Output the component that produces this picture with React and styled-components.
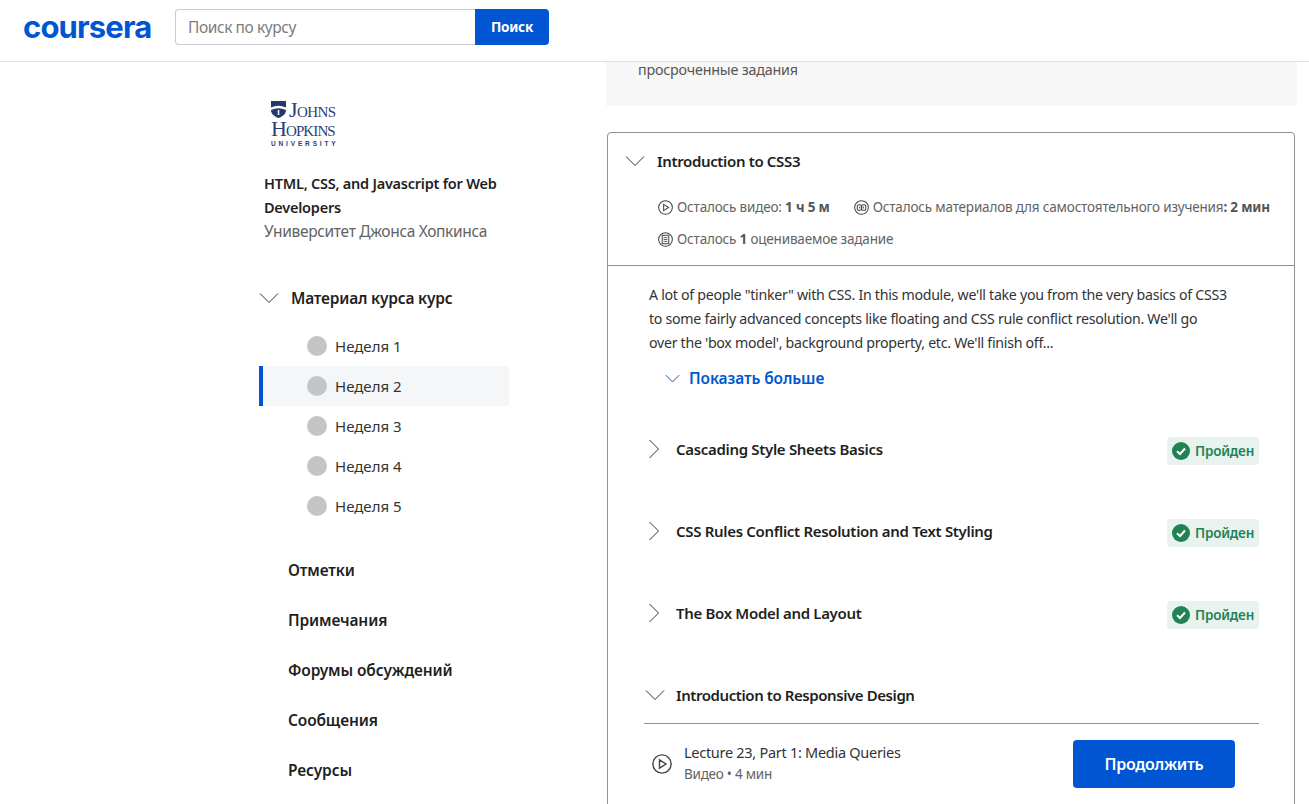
import React from 'react';
import styled, { createGlobalStyle } from 'styled-components';

const FONT = `"Noto Sans", "Open Sans", sans-serif`;

const Global = createGlobalStyle`
	html, body {
		margin: 0;
		padding: 0;
		background: #fff;
		font-family: ${FONT};
		color: #1f1f1f;
	}
	* { box-sizing: border-box; }
`;

const Page = styled.div`
	width: 1309px;
	height: 804px;
	overflow: hidden;
	display: flex;
	flex-direction: column;
`;

const Header = styled.header`
	height: 62px;
	flex: none;
	border-bottom: 1px solid #e1e1e3;
	display: flex;
	align-items: flex-start;
	padding: 9px 0 0 23px;
`;
const Wordmark = styled.div`
	width: 152px;
	height: 36px;
	font-family: Inter, sans-serif;
	font-weight: 700;
	font-size: 31px;
	line-height: 36px;
	letter-spacing: -0.85px;
	color: #0056d2;
`;
const SearchInput = styled.div`
	width: 300px;
	height: 36px;
	border: 1px solid #c9cbd4;
	border-right: none;
	border-radius: 4px 0 0 4px;
	padding-left: 12px;
	font-size: 15.5px;
	line-height: 34px;
	letter-spacing: -0.42px;
	color: #7c7c7c;
`;
const SearchButton = styled.div`
	width: 74px;
	height: 36px;
	background: #0056d2;
	color: #fff;
	border-radius: 0 4px 4px 0;
	font-size: 13.5px;
	font-weight: 700;
	line-height: 36px;
	text-align: center;
	letter-spacing: -0.2px;
`;

const Body = styled.div`
	flex: 1;
	display: flex;
	min-height: 0;
`;
const Sidebar = styled.aside`
	width: 606px;
	flex: none;
	padding: 38px 0 0 259px;
`;
const UniLogo = styled.div`
	margin-left: 12px;
	width: 68px;
	height: 46px;
	display: grid;
	grid-template-columns: 18px 1fr;
	grid-template-rows: 19px 19px 8px;
	font-family: "Liberation Serif", serif;
	color: #2c3e73;
`;
const Shield = styled.svg`
	width: 15px;
	height: 17px;
	margin-top: 1px;
`;
const LogoLine = styled.div`
	font-size: 22px;
	line-height: 19px;
	font-variant: small-caps;
	letter-spacing: ${p => p.$tight ? -0.9 : -0.6}px;
	white-space: nowrap;
	grid-column: ${p => p.$wide ? '1 / 3' : '2'};
`;
const LogoSmall = styled.div`
	grid-column: 1 / 3;
	font-family: "Liberation Sans", sans-serif;
	font-weight: 700;
	font-size: 6.5px;
	line-height: 8px;
	letter-spacing: 2.85px;
	white-space: nowrap;
	margin-top: 2px;
`;
const CourseBlock = styled.div`
	margin: 25px 0 0 5px;
	width: 250px;
`;
const CourseTitle = styled.div`
	font-size: 14.5px;
	font-weight: 600;
	line-height: 24px;
	letter-spacing: -0.24px;
	color: #1f1f1f;
`;
const CourseUni = styled.div`
	font-size: 15.5px;
	line-height: 24px;
	letter-spacing: -0.33px;
	color: #636363;
`;
const MaterialRow = styled.div`
	margin-top: 40px;
	height: 30px;
	display: flex;
	align-items: center;
	gap: 12px;
	font-size: 15.5px;
	font-weight: 600;
	letter-spacing: -0.2px;
`;
const WeekList = styled.div`
	margin-top: 13px;
	width: 250px;
`;
const WeekRow = styled.div`
	height: 40px;
	display: flex;
	align-items: center;
	gap: 8px;
	padding-left: ${p => p.$active ? 44 : 48}px;
	font-size: 15px;
	letter-spacing: 0;
	color: #333;
	background: ${p => p.$active ? '#f5f6f8' : 'transparent'};
	border-left: ${p => p.$active ? '4px solid #0056d2' : 'none'};
	border-radius: ${p => p.$active ? '0 4px 4px 0' : '0'};
`;
const Dot = styled.span`
	width: 20px;
	height: 20px;
	border-radius: 50%;
	background: #c4c5c7;
`;
const NavLinks = styled.nav`
	margin: 19px 0 0 29px;
`;
const NavLink = styled.div`
	height: 50px;
	font-size: 15.5px;
	font-weight: 600;
	line-height: 50px;
	letter-spacing: -0.14px;
	color: #1f1f1f;
`;

const Main = styled.main`
	width: 691px;
	flex: none;
`;
const Notice = styled.div`
	height: 44px;
	background: #f7f7f7;
	padding-left: 32px;
	font-size: 14.3px;
	line-height: 16px;
	letter-spacing: -0.2px;
	color: #555;
`;
const Card = styled.section`
	margin: 26px 0 0 1px;
	width: 688px;
	height: 720px;
	border: 1px solid #8f8f94;
	border-radius: 4px;
`;
const CardHead = styled.div`
	height: 133px;
	border-bottom: 1px solid #8f8f94;
`;
const CardTitle = styled.div`
	height: 55px;
	padding-left: 17px;
	display: flex;
	align-items: center;
	gap: 12px;
	font-size: 15px;
	font-weight: 600;
	letter-spacing: -0.35px;
`;
const MetaRow = styled.div`
	height: 32px;
	padding-left: 50px;
	display: flex;
	align-items: center;
	font-size: 13.5px;
	letter-spacing: -0.18px;
	color: #636363;
	&:nth-child(2) {
		margin-top: 3px;
	}
	b {
		font-weight: 700;
		color: #555;
	}
`;
const MetaItem = styled.span`
	display: flex;
	align-items: center;
	gap: 4px;
	margin-right: ${p => p.$gap || 0}px;
	white-space: pre;
`;
const CardBody = styled.div`
	padding: 17px 35px 0 36px;
`;
const Description = styled.p`
	margin: 0 0 0 5px;
	font-size: 14.2px;
	line-height: 24px;
	letter-spacing: -0.29px;
	color: #333;
	white-space: nowrap;
`;
const ShowMore = styled.div`
	margin: 11px 0 0 21px;
	height: 24px;
	display: flex;
	align-items: center;
	gap: 9px;
	font-size: 15.5px;
	font-weight: 600;
	letter-spacing: -0.1px;
	color: #0056d2;
`;
const LessonRow = styled.div`
	height: 82px;
	display: flex;
	align-items: center;
	gap: 12px;
	font-size: 15px;
	font-weight: 600;
	letter-spacing: -0.32px;
	color: #1f1f1f;
`;
const LessonList = styled.div`
	margin-top: 18px;
`;
const Badge = styled.div`
	margin: 4px 0 0 auto;
	width: 92px;
	height: 28px;
	border-radius: 4px;
	background: #e8f2ee;
	display: flex;
	align-items: center;
	gap: 5px;
	padding-left: 5px;
	font-size: 13.5px;
	font-weight: 600;
	letter-spacing: -0.2px;
	color: #1f8354;
`;
const SubHead = styled.div`
	margin-top: 14px;
	height: 56px;
	display: flex;
	align-items: center;
	padding: 0 0 2px 1px;
	gap: 11px;
	border-bottom: 1px solid #8f8f94;
	font-size: 15px;
	font-weight: 600;
	letter-spacing: -0.42px;
`;
const ItemRow = styled.div`
	height: 80px;
	display: flex;
	align-items: center;
	padding: 0 24px 0 8px;
	gap: 12px;
`;
const ItemText = styled.div`
	flex: 1;
	margin-top: -2px;
`;
const ItemName = styled.div`
	font-size: 14.5px;
	line-height: 21px;
	letter-spacing: -0.28px;
	color: #333;
`;
const ItemSub = styled.div`
	font-size: 13.5px;
	line-height: 21px;
	margin-top: 1px;
	letter-spacing: -0.25px;
	color: #636363;
`;
const ContinueButton = styled.div`
	width: 162px;
	height: 48px;
	border-radius: 4px;
	background: #0056d2;
	color: #fff;
	font-size: 16px;
	font-weight: 600;
	line-height: 48px;
	text-align: center;
	letter-spacing: -0.3px;
`;

const Chevron = ({ dir = 'down', size = 20, color = '#333' }) => (
	<svg width={size} height={size} viewBox="0 0 20 20" fill="none" style={{ flex: 'none' }}>
		{dir === 'down'
			? <path d="M1 5.500 L10 14.500 L19 5.500" stroke={color} strokeWidth={size < 20 ? 1.300 : 1} />
			: <path d="M5.500 1 L14.500 10 L5.500 19" stroke={color} strokeWidth="1" />}
	</svg>
);

const PlayIcon = ({ size = 15 }) => (
	<svg width={size} height={size} viewBox="0 0 16 16" fill="none" stroke="#444" strokeWidth="1.100" style={{ flex: 'none' }}>
		<circle cx="8" cy="8" r="7.300" />
		<path d="M6 4.700 L11.200 8 L6 11.300 Z" />
	</svg>
);

const ReadingIcon = () => (
	<svg width="15" height="15" viewBox="0 0 16 16" fill="none" stroke="#444" strokeWidth="1.100" style={{ flex: 'none' }}>
		<circle cx="8" cy="8" r="7.300" />
		<rect x="3.500" y="5" width="4.300" height="6" rx="1.500" />
		<rect x="8.200" y="5" width="4.300" height="6" rx="1.500" />
		<path d="M6 7v2M10 7v2" strokeWidth="1" />
	</svg>
);

const ListIcon = () => (
	<svg width="15" height="15" viewBox="0 0 16 16" fill="none" stroke="#444" strokeWidth="1.100" style={{ flex: 'none' }}>
		<circle cx="8" cy="8" r="7.300" />
		<rect x="4.500" y="3.500" width="7" height="9" />
		<path d="M6 6h4M6 8h4M6 10h4" strokeWidth=".9" />
	</svg>
);

const CheckIcon = () => (
	<svg width="18" height="18" viewBox="0 0 18 18" style={{ flex: 'none' }}>
		<circle cx="9" cy="9" r="9" fill="#1f8354" />
		<path d="M5 9.300 L8 12 L13 6.500" fill="none" stroke="#fff" strokeWidth="2" />
	</svg>
);

const lessons = [
	'Cascading Style Sheets Basics',
	'CSS Rules Conflict Resolution and Text Styling',
	'The Box Model and Layout',
];
const navLinks = ['Отметки', 'Примечания', 'Форумы обсуждений', 'Сообщения', 'Ресурсы'];

const App = () => {
	return (
		<Page>
			<Global />
			<Header>
				<Wordmark>coursera</Wordmark>
				<SearchInput>Поиск по курсу</SearchInput>
				<SearchButton>Поиск</SearchButton>
			</Header>
			<Body>
				<Sidebar>
					<UniLogo>
						<Shield viewBox="0 0 15 17">
							<path d="M0 0h15v9c0 4-3.500 6.500-7.500 8C3.500 15.500 0 13 0 9z" fill="#24386f" />
							<path d="M0 6.500 Q7.500 3 15 6.500 V9 Q7.500 5.500 0 9z" fill="#fff" />
							<path d="M7.500 9v5" stroke="#fff" strokeWidth="1.500" />
						</Shield>
						<LogoLine>Johns</LogoLine>
						<LogoLine $wide $tight>Hopkins</LogoLine>
						<LogoSmall>UNIVERSITY</LogoSmall>
					</UniLogo>
					<CourseBlock>
						<CourseTitle>HTML, CSS, and Javascript for Web Developers</CourseTitle>
						<CourseUni>Университет Джонса Хопкинса</CourseUni>
					</CourseBlock>
					<MaterialRow>
						<Chevron />
						Материал курса курс
					</MaterialRow>
					<WeekList>
						{[1, 2, 3, 4, 5].map(n => (
							<WeekRow key={n} $active={n === 2}>
								<Dot />
								Неделя {n}
							</WeekRow>
						))}
					</WeekList>
					<NavLinks>
						{navLinks.map(l => <NavLink key={l}>{l}</NavLink>)}
					</NavLinks>
				</Sidebar>
				<Main>
					<Notice>просроченные задания</Notice>
					<Card>
						<CardHead>
							<CardTitle>
								<Chevron />
								Introduction to CSS3
							</CardTitle>
							<MetaRow>
								<MetaItem $gap={24}><PlayIcon /><span>Осталось видео: <b>1 ч 5 м</b></span></MetaItem>
								<MetaItem><ReadingIcon /><span>Осталось материалов для самостоятельного изучения<b>: 2 мин</b></span></MetaItem>
							</MetaRow>
							<MetaRow>
								<MetaItem><ListIcon /><span>Осталось <b>1</b> оцениваемое задание</span></MetaItem>
							</MetaRow>
						</CardHead>
						<CardBody>
							<Description>
								A lot of people "tinker" with CSS. In this module, we'll take you from the very basics of CSS3<br />
								to some fairly advanced concepts like floating and CSS rule conflict resolution. We'll go<br />
								over the 'box model', background property, etc. We'll finish off...
							</Description>
							<ShowMore>
								<Chevron size={15} color="#0056d2" />
								Показать больше
							</ShowMore>
							<LessonList>
								{lessons.map(l => (
									<LessonRow key={l}>
										<Chevron dir="right" />
										{l}
										<Badge><CheckIcon />Пройден</Badge>
									</LessonRow>
								))}
							</LessonList>
							<SubHead>
								<Chevron />
								Introduction to Responsive Design
							</SubHead>
							<ItemRow>
								<PlayIcon size={20} />
								<ItemText>
									<ItemName>Lecture 23, Part 1: Media Queries</ItemName>
									<ItemSub>Видео • 4 мин</ItemSub>
								</ItemText>
								<ContinueButton>Продолжить</ContinueButton>
							</ItemRow>
						</CardBody>
					</Card>
				</Main>
			</Body>
		</Page>
	);
};

export default App;
